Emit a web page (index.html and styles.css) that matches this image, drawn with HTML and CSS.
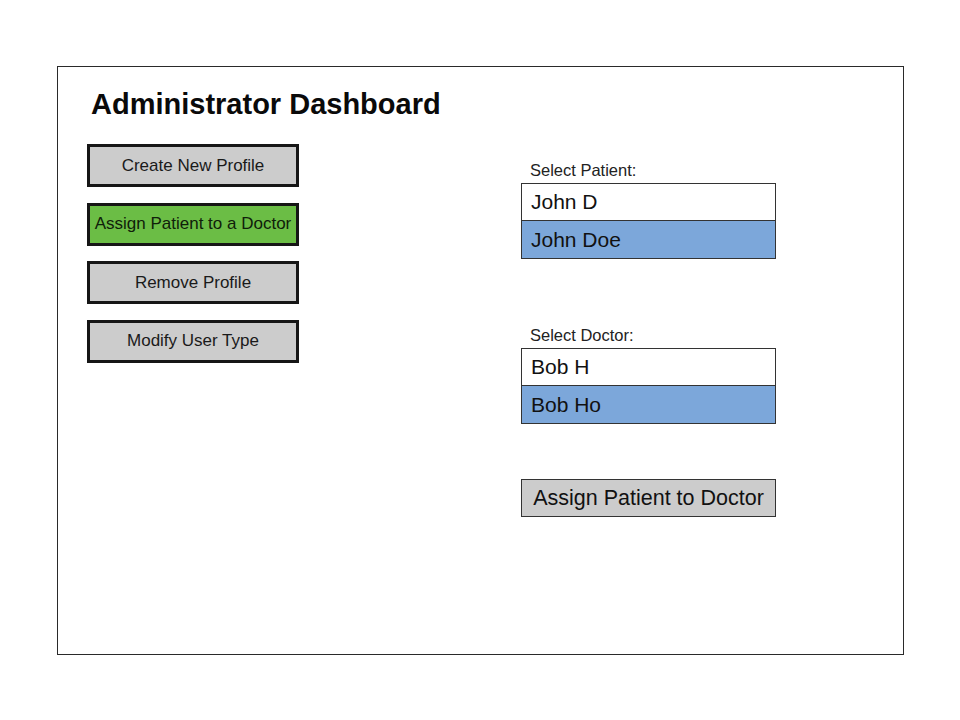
FILE: index.html
```html
<!DOCTYPE html>
<html lang="en">
<head>
<meta charset="utf-8">
<title>Administrator Dashboard</title>
<link rel="stylesheet" href="styles.css">
</head>
<body>
<div class="frame">
  <h1 class="title">Administrator Dashboard</h1>
  <div class="content">
    <div class="menu">
      <div class="menu-btn">Create New Profile</div>
      <div class="menu-btn active">Assign Patient to a Doctor</div>
      <div class="menu-btn">Remove Profile</div>
      <div class="menu-btn">Modify User Type</div>
    </div>
    <div class="panel">
      <div class="group">
        <div class="label">Select Patient:</div>
        <div class="field">
          <div class="input">John D</div>
          <div class="option">John Doe</div>
        </div>
      </div>
      <div class="group group-doctor">
        <div class="label">Select Doctor:</div>
        <div class="field">
          <div class="input">Bob H</div>
          <div class="option">Bob Ho</div>
        </div>
      </div>
      <div class="submit">Assign Patient to Doctor</div>
    </div>
  </div>
</div>
</body>
</html>
```
FILE: styles.css
```css
* { box-sizing: border-box; }
html, body { margin: 0; padding: 0; background: #ffffff; }
body {
  font-family: "Liberation Sans", Arial, sans-serif;
  color: #111111;
}
.frame {
  margin: 66px 0 0 57px;
  width: 847px;
  height: 589px;
  border: 1px solid #2a2a2a;
  padding: 20px 0 0 29px;
}
.title {
  margin: 0 0 23px 4px;
  font-size: 29px;
  line-height: 34px;
  font-weight: bold;
  color: #0a0a0a;
}
.content {
  display: flex;
  gap: 222px;
}
.menu {
  width: 212px;
  display: flex;
  flex-direction: column;
  gap: 15.5px;
}
.menu-btn {
  height: 43px;
  border: 3px solid #161616;
  background: #cccccc;
  display: flex;
  align-items: center;
  justify-content: center;
  font-size: 17px;
  color: #1a1a1a;
  white-space: nowrap;
}
.menu-btn.active {
  background: #6bbd45;
  color: #10200a;
}
.panel {
  width: 255px;
  margin-top: 16px;
  display: flex;
  flex-direction: column;
}
.label {
  font-size: 16.5px;
  line-height: 20px;
  padding-left: 9px;
  margin-bottom: 3px;
  color: #222222;
}
.group-doctor { margin-top: 66px; }
.field {
  border: 1px solid #333333;
}
.input, .option {
  height: 37px;
  display: flex;
  align-items: center;
  padding-left: 9px;
  font-size: 21px;
  color: #111111;
}
.input {
  background: #ffffff;
  border-bottom: 1px solid #333333;
}
.option {
  background: #7ca7da;
}
.submit {
  margin-top: 55px;
  height: 38px;
  border: 1px solid #333333;
  background: #cccccc;
  display: flex;
  align-items: center;
  justify-content: center;
  font-size: 21.5px;
  color: #111111;
  white-space: nowrap;
}
```
